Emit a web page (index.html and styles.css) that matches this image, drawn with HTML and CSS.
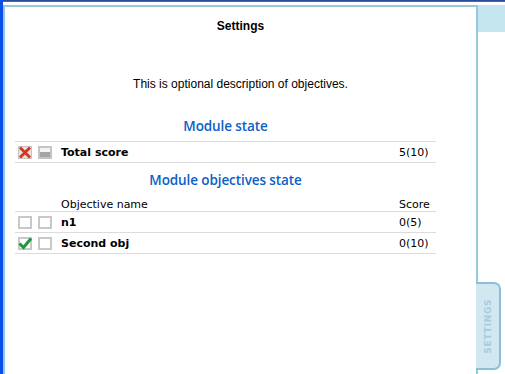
FILE: index.html
```html
<!DOCTYPE html>
<html lang="en">
<head>
  <meta charset="UTF-8">
  <title>Settings</title>
  <link rel="stylesheet" href="styles.css">
</head>
<body>
  <div class="topline"></div>
  <div class="main">
    <div class="panel">
      <h1>Settings</h1>
      <p class="desc">This is optional description of objectives.</p>

      <h2>Module state</h2>
      <div class="grid">
        <div class="row">
          <span class="ico">
            <svg width="14" height="13" viewBox="0 0 14 13">
              <rect x="0.5" y="0.5" width="13" height="12" fill="#e4e4e4" stroke="#c4c4c4"/>
              <path d="M2 1.5 L12 11.5 M12 1.5 L2 11.5" stroke="#d8341c" stroke-width="2.8"/>
            </svg>
          </span>
          <span class="ico">
            <svg width="14" height="13" viewBox="0 0 14 13">
              <rect x="1" y="1" width="12" height="11" fill="#f4f4f4" stroke="#c4c4c4" stroke-width="2"/>
              <rect x="2" y="6" width="10" height="5" fill="#a4a4a4"/>
            </svg>
          </span>
          <span class="name">Total score</span>
          <span class="score">5(10)</span>
        </div>
      </div>

      <h2>Module objectives state</h2>
      <div class="grid">
        <div class="row head">
          <span class="ico"></span>
          <span class="ico"></span>
          <span class="name">Objective name</span>
          <span class="score">Score</span>
        </div>
        <div class="row">
          <span class="ico">
            <svg width="14" height="13" viewBox="0 0 14 13">
              <rect x="1" y="1" width="12" height="11" fill="#fff" stroke="#c8c8c8" stroke-width="2"/>
            </svg>
          </span>
          <span class="ico">
            <svg width="14" height="13" viewBox="0 0 14 13">
              <rect x="1" y="1" width="12" height="11" fill="#fff" stroke="#c8c8c8" stroke-width="2"/>
            </svg>
          </span>
          <span class="name">n1</span>
          <span class="score">0(5)</span>
        </div>
        <div class="row">
          <span class="ico">
            <svg width="14" height="13" viewBox="0 0 14 13">
              <rect x="1" y="1" width="12" height="11" fill="#fff" stroke="#c8c8c8" stroke-width="2"/>
              <path d="M1.5 6.5 L5.5 10.5 L13 1.5" fill="none" stroke="#1e9a3c" stroke-width="3"/>
            </svg>
          </span>
          <span class="ico">
            <svg width="14" height="13" viewBox="0 0 14 13">
              <rect x="1" y="1" width="12" height="11" fill="#fff" stroke="#c8c8c8" stroke-width="2"/>
            </svg>
          </span>
          <span class="name">Second obj</span>
          <span class="score">0(10)</span>
        </div>
      </div>
    </div>

    <div class="side">
      <div class="side-head"></div>
      <div class="tab"><span>SETTINGS</span></div>
    </div>
  </div>
</body>
</html>
```

FILE: styles.css
```css
html, body {
  margin: 0;
  height: 100%;
}

body {
  width: 505px;
  height: 374px;
  overflow: hidden;
  background: #fff;
  border-left: 3px solid #0c4fe6;
  box-sizing: border-box;
  font-family: "Liberation Sans", Arial, sans-serif;
  color: #000;
}

.topline {
  height: 2px;
  background: linear-gradient(#23408e, #4a72c8);
}

.main {
  display: flex;
  height: 372px;
}

.panel {
  width: 471px;
  margin-top: 3px;
  border: 2px solid #96c8dc;
  border-bottom: none;
}

h1 {
  margin: 12px 0 0;
  font-size: 12px;
  line-height: 15px;
  font-weight: bold;
  text-align: center;
}

.desc {
  margin: 43px 0 0;
  font-size: 12px;
  line-height: 15px;
  text-align: center;
}

h2 {
  width: 421px;
  margin: 0 0 0 10px;
  font-family: "Open Sans", sans-serif;
  font-size: 13.5px;
  font-weight: 600;
  letter-spacing: -0.1px;
  color: #0c60c6;
  text-align: center;
}

.desc + h2 {
  margin-top: 24px;
  line-height: 20px;
}

.grid + h2 {
  margin-top: 7px;
  line-height: 20px;
}

.grid {
  margin: 5px 0 0 10px;
  width: 421px;
  border-top: 1px solid #dcdcdc;
}

.grid:has(.head) {
  border-top: none;
  margin-top: 3px;
}

.row {
  display: flex;
  align-items: center;
  height: 20px;
  border-bottom: 1px solid #dcdcdc;
  font-family: "DejaVu Sans", Verdana, sans-serif;
  font-size: 11px;
}

.row.head {
  height: 18px;
  align-items: flex-end;
  line-height: 13px;
}

.row.head .name {
  font-weight: normal;
}

.ico {
  width: 14px;
  height: 13px;
  display: flex;
  margin-left: 3px;
}

.ico + .ico {
  margin-left: 6px;
}

.name {
  margin-left: 9px;
  font-weight: bold;
  flex: 1;
}

.score {
  width: 37px;
}

.side {
  width: 27px;
  margin-top: 3px;
}

.side-head {
  height: 27px;
  background: #c5e6ee;
}

.tab {
  margin-top: 250px;
  margin-left: -2px;
  width: 25px;
  height: 88px;
  box-sizing: border-box;
  background: #d2e8f0;
  border: 2px solid #8cc0d8;
  border-left: none;
  border-radius: 0 7px 7px 0;
  display: flex;
  align-items: center;
  justify-content: center;
}

.tab span {
  writing-mode: vertical-rl;
  transform: rotate(180deg);
  font-family: "DejaVu Sans", Verdana, sans-serif;
  font-size: 9px;
  font-weight: bold;
  letter-spacing: 0.6px;
  color: #a6cce0;
}
```
